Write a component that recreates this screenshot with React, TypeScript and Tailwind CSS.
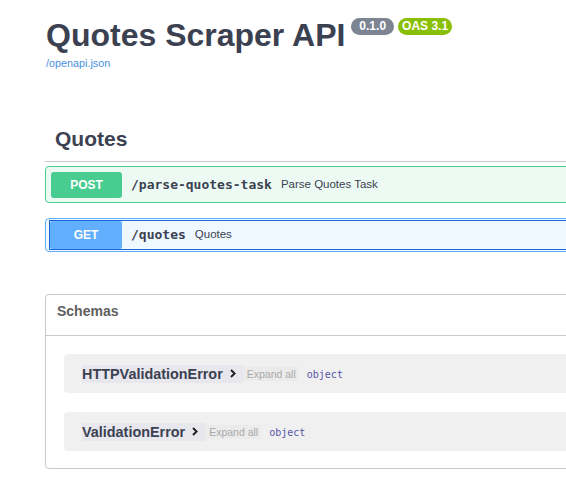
import React from 'react';

const sans = "font-['Liberation_Sans',Arial,sans-serif]";
const mono = "font-['DejaVu_Sans_Mono',monospace]";

function Chevron() {
  return (
    <svg width="6" height="9" viewBox="0 0 6 9" aria-hidden="true">
      <path d="M1 1l3.6 3.5L1 8" stroke="#1f1f1f" strokeWidth="1.9" fill="none" />
    </svg>
  );
}

function SchemaRow({ name }: { name: string }) {
  return (
    <div className="flex h-[39px] items-center rounded-[4px] bg-[#f0f0f0] pl-[18px]">
      <span className="flex h-[18px] items-center gap-[7px] bg-[#e7e7ed] pr-[7px] text-[14.4px] font-bold leading-[18px] text-[#3b4151]">
        {name}
        <Chevron />
      </span>
      <span className="flex h-[14px] items-center bg-[#ebebeb] pl-[4px] pr-[2px] text-[10.5px] leading-[14px] text-[#aaaaaa]">
        Expand all
      </span>
      <span className={`${mono} ml-[9px] mt-[3px] text-[10px] leading-[14px] text-[#5555aa]`}>object</span>
    </div>
  );
}

export default function App() {
  return (
    <div className={`${sans} h-screen w-screen overflow-hidden bg-white text-[#3b4151]`}>
      <div className="w-[1200px] pl-[45px]">
        <div className="flex items-start pt-[17px]">
          <h1 className="pl-px text-[32px] font-bold leading-[36px]">Quotes Scraper API</h1>
          <span className="ml-[6px] mt-px rounded-full bg-[#7d8492] px-2 text-[12px] font-bold leading-[17px] text-white">
            0.1.0
          </span>
          <span className="ml-[4px] mt-px rounded-full bg-[#89bf04] px-[4px] text-[12px] font-bold leading-[17px] text-white">
            OAS 3.1
          </span>
        </div>
        <a href="#" className="mt-[3px] block pl-px text-[10.8px] leading-[14px] text-[#4990e2]">
          /openapi.json
        </a>

        <section className="mt-[47px]">
          <h3 className="border-b border-[#3b4151]/30 py-[10px] pl-[10px] text-[21px] font-bold leading-[24px]">
            Quotes
          </h3>

          <div className="mt-[4px] flex items-center rounded-[4px] border border-[#49cc90] bg-[#edfaf4] pb-[4px] pl-[5px] pt-[5px]">
            <span className="flex h-[26px] w-[71px] items-center justify-center rounded-[3px] bg-[#49cc90] text-[12px] font-bold text-white">
              POST
            </span>
            <span className={`${mono} ml-[9px] text-[13px] font-bold text-[#3b4151]`}>/parse-quotes-task</span>
            <span className="ml-[9px] text-[11.5px] text-[#3b4151]">Parse Quotes Task</span>
          </div>

          <div className="mt-[15px] rounded-[4px] border border-[#61affe] bg-[#eff7ff] px-[3px] py-px">
            <div className="flex items-center border border-[#1a66d9]">
              <span className="flex h-[28px] w-[72px] items-center justify-center rounded-[2px] bg-[#61affe] text-[12px] font-bold text-white">
                GET
              </span>
              <span className={`${mono} ml-[9px] text-[13px] font-bold text-[#3b4151]`}>/quotes</span>
              <span className="ml-[9px] text-[11.5px] text-[#3b4151]">Quotes</span>
            </div>
          </div>
        </section>

        <section className="mt-[42px] rounded-[4px] border border-[#c8c8c8]">
          <h4 className="border-b border-[#c8c8c8] pb-[14px] pl-[11px] pt-[6px] text-[14px] font-bold leading-[20px] text-[#606060]">
            Schemas
          </h4>
          <div className="flex flex-col gap-[19px] px-[18px] pb-[17px] pt-[18px]">
            <SchemaRow name="HTTPValidationError" />
            <SchemaRow name="ValidationError" />
          </div>
        </section>
      </div>
    </div>
  );
}
